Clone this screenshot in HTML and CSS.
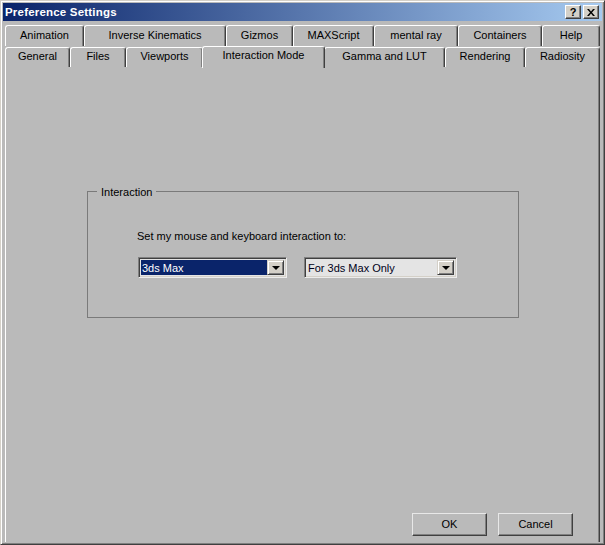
FILE: index.html
```html
<!DOCTYPE html>
<html>
<head>
<meta charset="utf-8">
<link rel="stylesheet" href="styles.css">
</head>
<body>
<div class="window">
  <div class="titlebar">
    <span class="title">Preference Settings</span>
    <div class="tbtns">
      <span class="tbtn help">?</span>
      <span class="tbtn close"><svg width="8" height="7" viewBox="0 0 8 7"><path d="M0 0h2l2 2.5L6 0h2L5 3.5 8 7H6L4 4.5 2 7H0l3-3.5z" fill="#000"/></svg></span>
    </div>
  </div>
  <div class="tabs">
    <div class="row row1">
      <div class="tab">Animation</div>
      <div class="tab">Inverse Kinematics</div>
      <div class="tab">Gizmos</div>
      <div class="tab">MAXScript</div>
      <div class="tab">mental ray</div>
      <div class="tab">Containers</div>
      <div class="tab">Help</div>
    </div>
    <div class="row row2">
      <div class="tab">General</div>
      <div class="tab">Files</div>
      <div class="tab">Viewports</div>
      <div class="tab active">Interaction Mode</div>
      <div class="tab">Gamma and LUT</div>
      <div class="tab">Rendering</div>
      <div class="tab">Radiosity</div>
    </div>
  </div>
  <div class="panel">
    <div class="group">
      <span class="legend">Interaction</span>
      <div class="prompt">Set my mouse and keyboard interaction to:</div>
      <div class="combos">
        <div class="combo c1"><span class="val sel">3ds Max</span><span class="arrow"><i></i></span></div>
        <div class="combo c2"><span class="val">For 3ds Max Only</span><span class="arrow"><i></i></span></div>
      </div>
    </div>
    <div class="actions">
      <div class="btn">OK</div>
      <div class="btn">Cancel</div>
    </div>
  </div>
</div>
</body>
</html>
```
FILE: styles.css
```css
html, body {
  margin: 0;
  padding: 0;
  background: #bababa;
}
body {
  font-family: "Liberation Sans", Arial, sans-serif;
  font-size: 11px;
  color: #000;
}
.window {
  width: 605px;
  height: 545px;
  box-sizing: border-box;
  background: #bababa;
  border-top: 1px solid #d4d0c8;
  border-left: 1px solid #d4d0c8;
  border-right: 1px solid #404040;
  border-bottom: 1px solid #404040;
  box-shadow: inset 1px 1px #ffffff, inset -1px -1px #808080;
  padding: 2px;
  display: flex;
  flex-direction: column;
}
.titlebar {
  height: 18px;
  background: linear-gradient(to right, #0a246a, #a6caf0);
  display: flex;
  align-items: center;
  justify-content: space-between;
  padding: 0 3px 0 2px;
  flex-shrink: 0;
}
.title {
  color: #fff;
  font-weight: bold;
  font-size: 11.5px;
  letter-spacing: 0.2px;
}
.tbtns {
  display: flex;
  gap: 2px;
}
.tbtn {
  width: 16px;
  height: 14px;
  box-sizing: border-box;
  background: #d4d0c8;
  border-top: 1px solid #fff;
  border-left: 1px solid #fff;
  border-right: 1px solid #404040;
  border-bottom: 1px solid #404040;
  box-shadow: inset -1px -1px #808080;
  display: flex;
  align-items: center;
  justify-content: center;
  font-weight: bold;
  font-size: 11px;
  line-height: 12px;
}
.tabs {
  padding: 0 2px;
  margin-top: 4px;
  flex-shrink: 0;
}
.row {
  display: grid;
  position: relative;
}
.row1 {
  grid-template-columns: 79px 142px 67px 81px 84px 84px 1fr;
  height: 21px;
}
.row2 {
  grid-template-columns: 65px 56px 77px 121px 121px 80px 1fr;
  height: 20px;
  align-items: end;
  z-index: 2;
}
.tab {
  box-sizing: border-box;
  height: 20px;
  border-top: 1px solid #fff;
  border-left: 1px solid #fff;
  border-right: 1px solid #404040;
  box-shadow: inset -1px 0 #808080;
  border-radius: 3px 3px 0 0;
  display: flex;
  align-items: center;
  justify-content: center;
  background: #bababa;
  padding-bottom: 3px;
}
.row1 .tab {
  height: 21px;
}
.tab.active {
  height: 22px;
  margin-bottom: -1px;
  margin-left: -1px;
  margin-right: -1px;
  padding-bottom: 5px;
  position: relative;
  z-index: 3;
}
.panel {
  flex: 1;
  margin: 0 2px;
  border-top: 1px solid #fff;
  border-left: 1px solid #fff;
  border-right: 1px solid #404040;
  box-shadow: inset -1px 0 #808080;
  display: flex;
  flex-direction: column;
  position: relative;
  z-index: 1;
}
.group {
  position: relative;
  margin: 124px 0 0 81px;
  width: 432px;
  height: 127px;
  box-sizing: border-box;
  border: 1px solid #7a7a7a;
  padding: 37px 0 0 49px;
}
.legend {
  position: absolute;
  left: 9px;
  top: -7px;
  padding: 0 4px;
  background: #bababa;
  line-height: 14px;
}
.prompt {
  line-height: 14px;
}
.combos {
  display: flex;
  gap: 17px;
  margin-top: 14px;
  padding-left: 1px;
}
.combo {
  height: 21px;
  box-sizing: border-box;
  border-top: 1px solid #808080;
  border-left: 1px solid #808080;
  border-right: 1px solid #ececec;
  border-bottom: 1px solid #ececec;
  box-shadow: inset 1px 1px #404040, inset -1px -1px #d4d0c8;
  padding: 2px;
  display: flex;
}
.c1 { width: 149px; background: #e4e4e4; }
.c2 { width: 153px; background: #e4e4e4; }
.val {
  flex: 1;
  display: flex;
  align-items: center;
  padding-left: 1px;
  color: #000018;
}
.val.sel {
  background: #0a246a;
  color: #fff;
}
.arrow {
  width: 17px;
  box-sizing: border-box;
  background: #d4d0c8;
  border-top: 1px solid #d4d0c8;
  border-left: 1px solid #d4d0c8;
  border-right: 1px solid #404040;
  border-bottom: 1px solid #404040;
  box-shadow: inset 1px 1px #fff, inset -1px -1px #808080;
  display: flex;
  align-items: center;
  justify-content: center;
}
.arrow i {
  width: 0;
  height: 0;
  border-left: 4px solid transparent;
  border-right: 4px solid transparent;
  border-top: 4px solid #000;
  margin-top: 1px;
}
.actions {
  margin-top: auto;
  display: flex;
  justify-content: flex-end;
  gap: 11px;
  padding: 0 26px 6px 0;
}
.btn {
  width: 75px;
  height: 23px;
  box-sizing: border-box;
  border-top: 1px solid #e8e8e8;
  border-left: 1px solid #e8e8e8;
  border-right: 1px solid #404040;
  border-bottom: 1px solid #404040;
  box-shadow: inset -1px -1px #808080;
  display: flex;
  align-items: center;
  justify-content: center;
  padding-bottom: 1px;
}
```
